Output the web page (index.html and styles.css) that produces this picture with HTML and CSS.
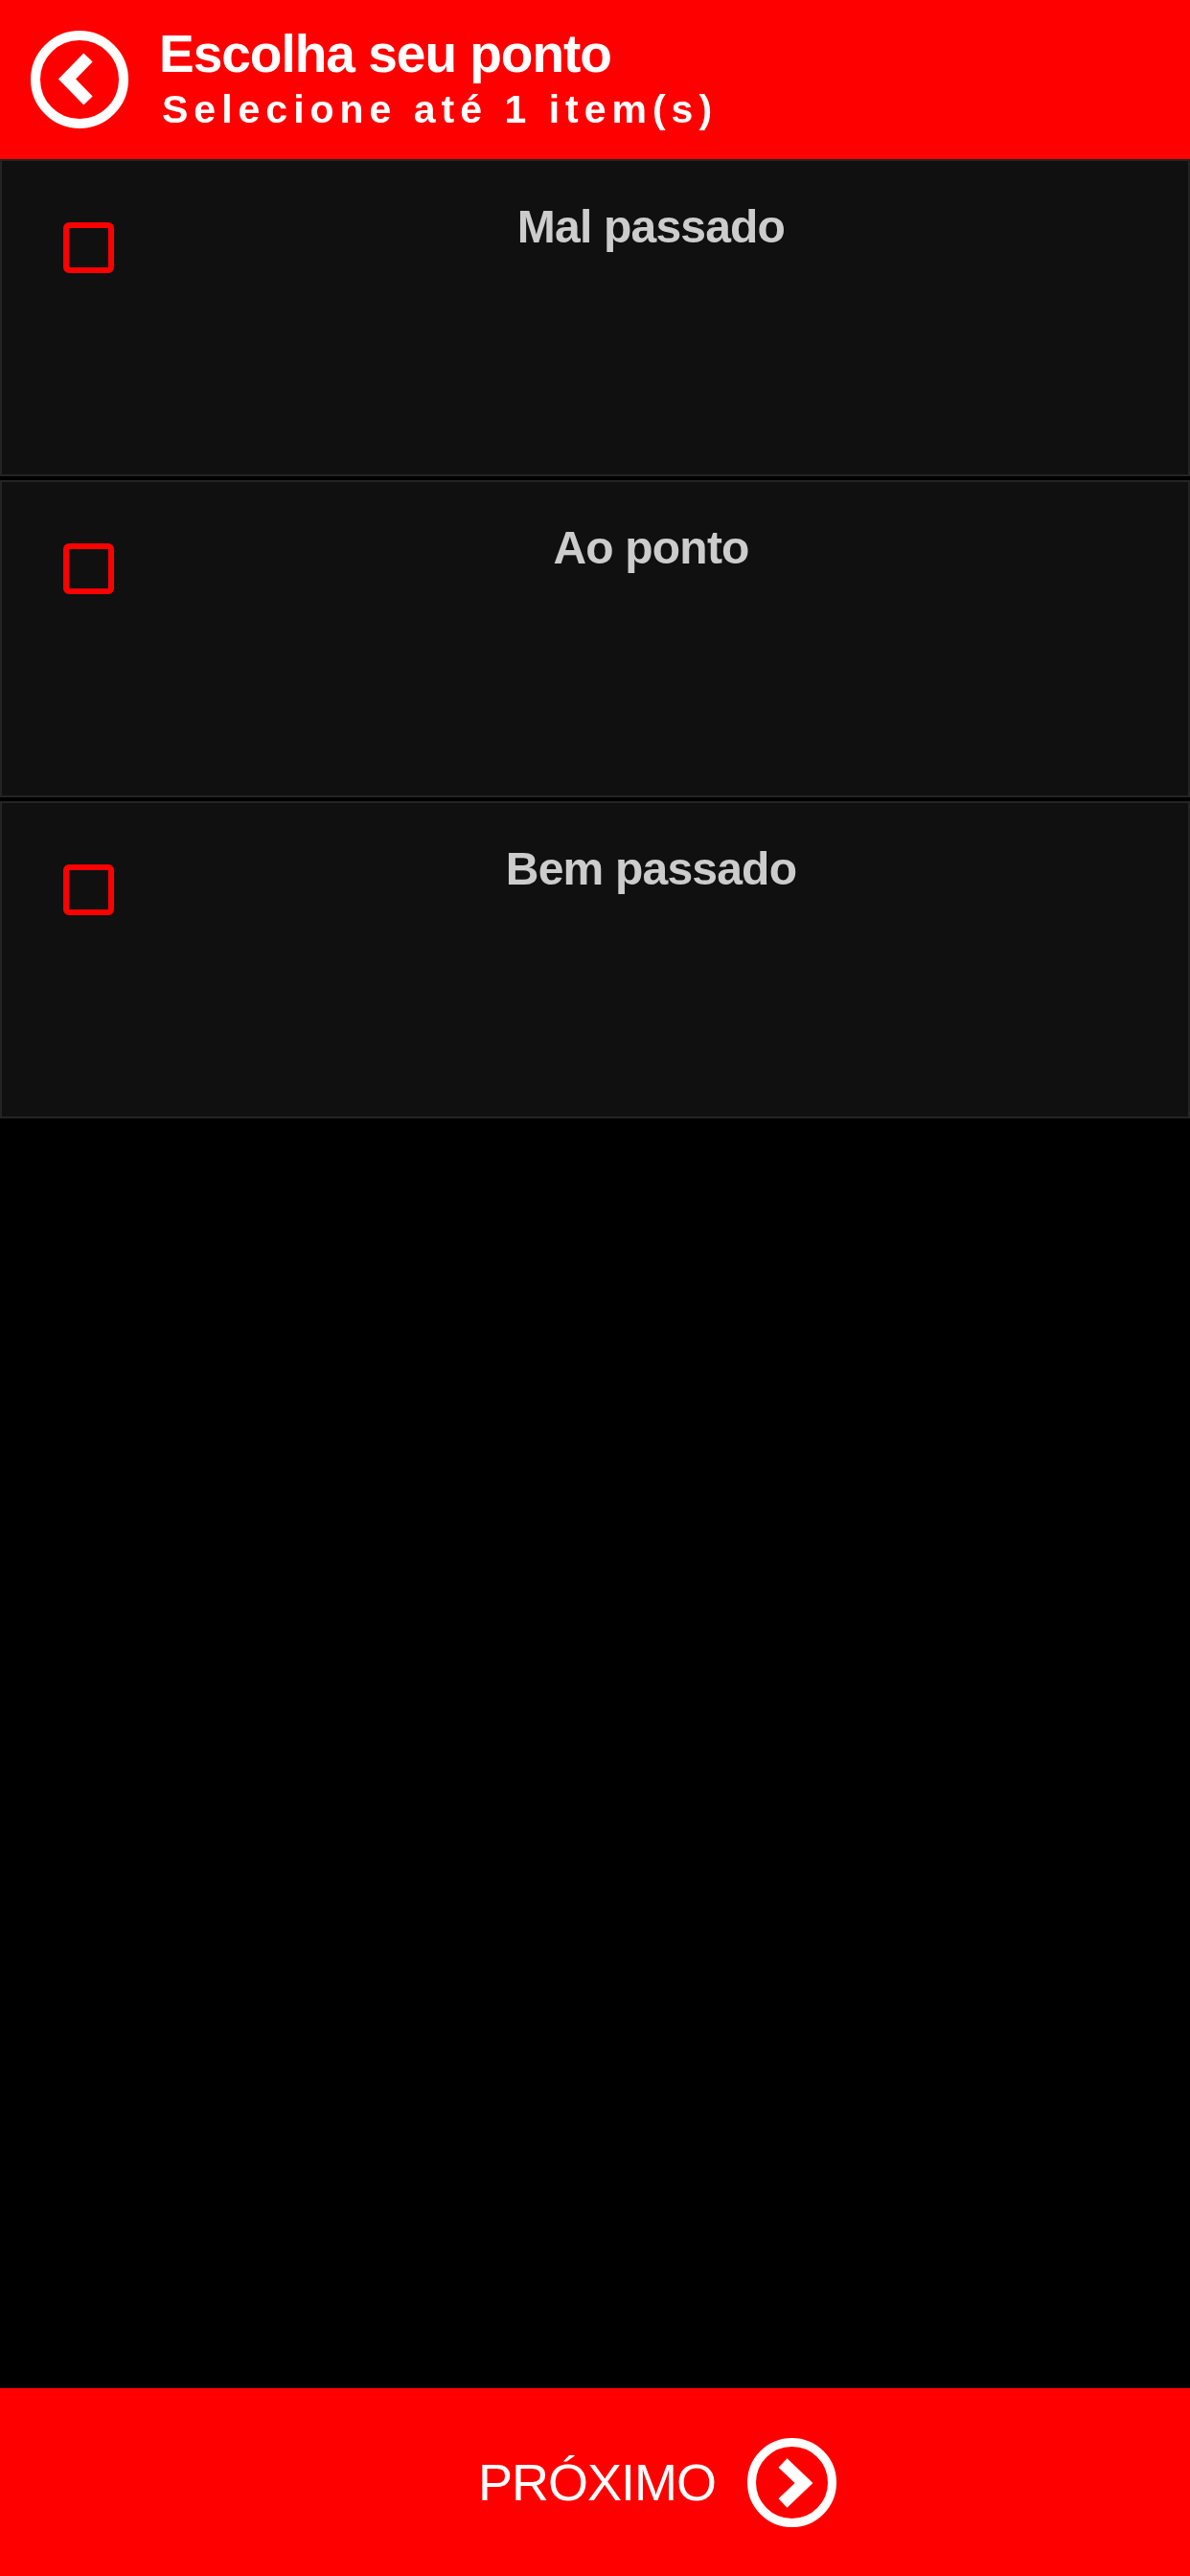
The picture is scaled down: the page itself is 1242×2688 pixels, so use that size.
FILE: index.html
```html
<!DOCTYPE html>
<html lang="pt-BR">
<head>
<meta charset="utf-8">
<title>Escolha seu ponto</title>
<link rel="stylesheet" href="styles.css">
</head>
<body>
<div class="app">
  <header class="header">
    <svg class="back-icon" viewBox="0 0 102 102" aria-hidden="true">
      <circle cx="51" cy="51" r="46" fill="none" stroke="#fff" stroke-width="10"/>
      <path d="M60 28 L38 50.5 L60 73" fill="none" stroke="#fff" stroke-width="13"/>
    </svg>
    <div class="titles">
      <h1 class="title">Escolha seu ponto</h1>
      <p class="subtitle">Selecione até 1 item(s)</p>
    </div>
  </header>
  <main class="options">
    <label class="option"><span class="check-col"><span class="check"></span></span><span class="name">Mal passado</span></label>
    <label class="option"><span class="check-col"><span class="check"></span></span><span class="name">Ao ponto</span></label>
    <label class="option"><span class="check-col"><span class="check"></span></span><span class="name">Bem passado</span></label>
  </main>
  <footer class="footer">
    <span class="next-label">PRÓXIMO</span>
    <svg class="next-icon" viewBox="0 0 93 93" aria-hidden="true">
      <circle cx="46.5" cy="46.5" r="42" fill="none" stroke="#fff" stroke-width="9"/>
      <path d="M37 26 L59 47 L37 68" fill="none" stroke="#fff" stroke-width="13"/>
    </svg>
  </footer>
</div>
</body>
</html>
```
FILE: styles.css
```css
* { box-sizing: border-box; }
html, body { margin: 0; padding: 0; background: #000; }
body { font-family: "Liberation Sans", Arial, sans-serif; }
.app { display: flex; flex-direction: column; height: 2688px; overflow: hidden; }
.header {
  height: 166px;
  flex: none;
  background: #f00;
  color: #fff;
  display: flex;
  align-items: flex-start;
  padding: 30px 0 0 32px;
  gap: 32px;
}
.back-icon { width: 102px; height: 102px; flex: none; margin-top: 2px; filter: blur(0.6px); }
.titles { display: flex; flex-direction: column; filter: blur(0.6px); }
.title {
  margin: 0;
  font-size: 55px;
  line-height: 52px;
  font-weight: 700;
  letter-spacing: -1px;
}
.subtitle {
  margin: 10px 0 0 3px;
  font-size: 41px;
  line-height: 44px;
  font-weight: 700;
  letter-spacing: 6px;
}
.options { flex: 1; display: flex; flex-direction: column; gap: 4px; }
.option {
  height: 331px;
  flex: none;
  display: flex;
  background: #101010;
  border: 2px solid #242424;
}
.check-col { width: 117px; flex: none; padding: 64px 0 0 64px; }
.check {
  display: block;
  width: 53px;
  height: 53px;
  border: 6px solid #f00;
  border-radius: 6px;
  filter: blur(0.5px);
}
.name {
  flex: 1;
  text-align: center;
  color: #ccc;
  font-size: 48px;
  line-height: 50px;
  font-weight: 700;
  letter-spacing: -0.8px;
  padding-top: 44px;
  height: max-content;
  filter: blur(0.6px);
}
.footer {
  height: 196px;
  flex: none;
  background: #f00;
  color: #fff;
  display: flex;
  align-items: center;
  justify-content: center;
  gap: 33px;
  padding-left: 130px;
}
.next-label { font-size: 54px; line-height: 60px; letter-spacing: -1px; filter: blur(0.5px); }
.next-icon { width: 93px; height: 93px; flex: none; filter: blur(0.6px); }
```
